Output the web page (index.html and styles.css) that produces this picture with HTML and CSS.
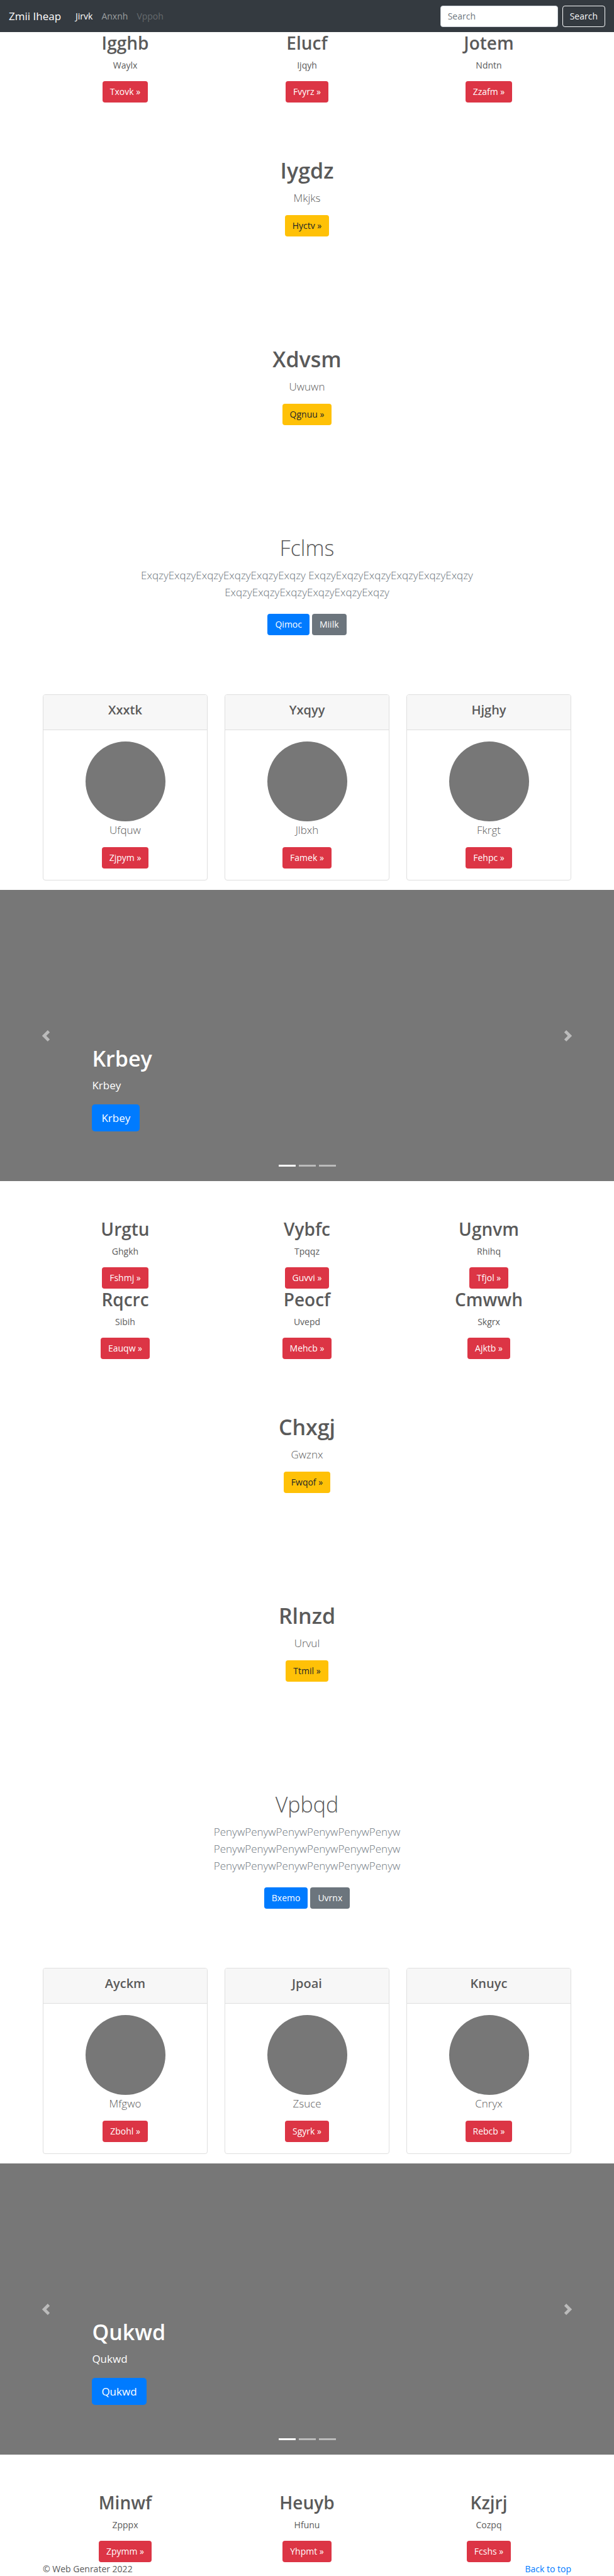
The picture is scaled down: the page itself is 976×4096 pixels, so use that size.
FILE: index.html
```html
<!DOCTYPE html>
<html lang="en">
<head>
<meta charset="utf-8">
<meta name="viewport" content="width=device-width, initial-scale=1">
<title>Zmii Iheap</title>
<link rel="stylesheet" href="styles.css">
</head>
<body id="top">
<header class="navbar">
  <a class="brand" href="#top">Zmii Iheap</a>
  <nav class="nav">
    <a class="nav-link active" href="#">Jirvk</a>
    <a class="nav-link" href="#">Anxnh</a>
    <a class="nav-link disabled" aria-disabled="true">Vppoh</a>
  </nav>
  <form class="search">
    <input class="search-input" type="search" placeholder="Search" aria-label="Search">
    <button class="btn btn-outline" type="submit">Search</button>
  </form>
</header>

<main>
  <section class="container columns">
    <div class="column"><h2>Igghb</h2><p>Waylx</p><a class="btn btn-danger" href="#">Txovk »</a></div>
    <div class="column"><h2>Elucf</h2><p>Ijqyh</p><a class="btn btn-danger" href="#">Fvyrz »</a></div>
    <div class="column"><h2>Jotem</h2><p>Ndntn</p><a class="btn btn-danger" href="#">Zzafm »</a></div>
  </section>

  <section class="hero"><h1>Iygdz</h1><p class="lead">Mkjks</p><a class="btn btn-warning" href="#">Hyctv »</a></section>
  <section class="hero"><h1>Xdvsm</h1><p class="lead">Uwuwn</p><a class="btn btn-warning" href="#">Qgnuu »</a></section>
  <section class="hero">
    <h1 class="light">Fclms</h1>
    <p class="lead muted">ExqzyExqzyExqzyExqzyExqzyExqzy ExqzyExqzyExqzyExqzyExqzyExqzy ExqzyExqzyExqzyExqzyExqzyExqzy</p>
    <div class="actions"><a class="btn btn-primary" href="#">Qimoc</a><a class="btn btn-secondary" href="#">Miilk</a></div>
  </section>

  <section class="container cards">
    <article class="card"><div class="card-header"><h4>Xxxtk</h4></div><div class="card-body"><div class="avatar"></div><p class="lead">Ufquw</p><a class="btn btn-danger" href="#">Zjpym »</a></div></article>
    <article class="card"><div class="card-header"><h4>Yxqyy</h4></div><div class="card-body"><div class="avatar"></div><p class="lead">Jlbxh</p><a class="btn btn-danger" href="#">Famek »</a></div></article>
    <article class="card"><div class="card-header"><h4>Hjghy</h4></div><div class="card-body"><div class="avatar"></div><p class="lead">Fkrgt</p><a class="btn btn-danger" href="#">Fehpc »</a></div></article>
  </section>

  <section class="carousel">
    <button class="control" type="button" aria-label="Previous"><svg viewBox="0 0 8 8"><path d="M5.25 0l-4 4 4 4 1.5-1.5-2.5-2.5 2.5-2.5-1.5-1.5z"/></svg></button>
    <div class="caption"><h1>Krbey</h1><p>Krbey</p><a class="btn btn-primary btn-lg" href="#">Krbey</a></div>
    <button class="control" type="button" aria-label="Next"><svg viewBox="0 0 8 8"><path d="M2.75 0l-1.5 1.5 2.5 2.5-2.5 2.5 1.5 1.5 4-4-4-4z"/></svg></button>
    <div class="indicators"><button class="current" type="button" aria-label="Slide 1"></button><button type="button" aria-label="Slide 2"></button><button type="button" aria-label="Slide 3"></button></div>
  </section>

  <section class="container columns">
    <div class="column"><h2>Urgtu</h2><p>Ghgkh</p><a class="btn btn-danger" href="#">Fshmj »</a></div>
    <div class="column"><h2>Vybfc</h2><p>Tpqqz</p><a class="btn btn-danger" href="#">Guvvi »</a></div>
    <div class="column"><h2>Ugnvm</h2><p>Rhihq</p><a class="btn btn-danger" href="#">Tfjol »</a></div>
    <div class="column"><h2>Rqcrc</h2><p>Sibih</p><a class="btn btn-danger" href="#">Eauqw »</a></div>
    <div class="column"><h2>Peocf</h2><p>Uvepd</p><a class="btn btn-danger" href="#">Mehcb »</a></div>
    <div class="column"><h2>Cmwwh</h2><p>Skgrx</p><a class="btn btn-danger" href="#">Ajktb »</a></div>
  </section>

  <section class="hero"><h1>Chxgj</h1><p class="lead">Gwznx</p><a class="btn btn-warning" href="#">Fwqof »</a></section>
  <section class="hero"><h1>Rlnzd</h1><p class="lead">Urvul</p><a class="btn btn-warning" href="#">Ttmil »</a></section>
  <section class="hero">
    <h1 class="light">Vpbqd</h1>
    <p class="lead muted">PenywPenywPenywPenywPenywPenyw PenywPenywPenywPenywPenywPenyw PenywPenywPenywPenywPenywPenyw</p>
    <div class="actions"><a class="btn btn-primary" href="#">Bxemo</a><a class="btn btn-secondary" href="#">Uvrnx</a></div>
  </section>

  <section class="container cards">
    <article class="card"><div class="card-header"><h4>Ayckm</h4></div><div class="card-body"><div class="avatar"></div><p class="lead">Mfgwo</p><a class="btn btn-danger" href="#">Zbohl »</a></div></article>
    <article class="card"><div class="card-header"><h4>Jpoai</h4></div><div class="card-body"><div class="avatar"></div><p class="lead">Zsuce</p><a class="btn btn-danger" href="#">Sgyrk »</a></div></article>
    <article class="card"><div class="card-header"><h4>Knuyc</h4></div><div class="card-body"><div class="avatar"></div><p class="lead">Cnryx</p><a class="btn btn-danger" href="#">Rebcb »</a></div></article>
  </section>

  <section class="carousel">
    <button class="control" type="button" aria-label="Previous"><svg viewBox="0 0 8 8"><path d="M5.25 0l-4 4 4 4 1.5-1.5-2.5-2.5 2.5-2.5-1.5-1.5z"/></svg></button>
    <div class="caption"><h1>Qukwd</h1><p>Qukwd</p><a class="btn btn-primary btn-lg" href="#">Qukwd</a></div>
    <button class="control" type="button" aria-label="Next"><svg viewBox="0 0 8 8"><path d="M2.75 0l-1.5 1.5 2.5 2.5-2.5 2.5 1.5 1.5 4-4-4-4z"/></svg></button>
    <div class="indicators"><button class="current" type="button" aria-label="Slide 1"></button><button type="button" aria-label="Slide 2"></button><button type="button" aria-label="Slide 3"></button></div>
  </section>

  <section class="container columns">
    <div class="column"><h2>Minwf</h2><p>Zpppx</p><a class="btn btn-danger" href="#">Zpymm »</a></div>
    <div class="column"><h2>Heuyb</h2><p>Hfunu</p><a class="btn btn-danger" href="#">Yhpmt »</a></div>
    <div class="column"><h2>Kzjrj</h2><p>Cozpq</p><a class="btn btn-danger" href="#">Fcshs »</a></div>
  </section>
</main>

<footer class="container footer">
  <span>© Web Genrater 2022</span>
  <a href="#top">Back to top</a>
</footer>
</body>
</html>
```
FILE: styles.css
```css
* { box-sizing: border-box; }

body {
  margin: 0;
  background: #fff;
  color: #5a5a5a;
  font-family: "Open Sans", "Noto Sans", sans-serif;
  font-size: 14px;
  line-height: 22px;
}

h1, h2, h4, p { margin: 0; }

h1 { font-size: 34px; font-weight: 600; line-height: 43px; margin-bottom: 8px; }
h2 { font-size: 28px; font-weight: 600; line-height: 35px; margin-bottom: 7px; }
h4 { font-size: 20px; font-weight: 600; line-height: 26px; margin-bottom: 7px; }
p { margin-bottom: 14px; }

.light { font-weight: 300; }
.lead { font-size: 17px; font-weight: 300; line-height: 27px; }
.muted { color: #6c757d; }

.container {
  width: 100%;
  max-width: 868px;
  margin: 0 auto;
  padding: 0 14px;
}

/* Buttons */
.btn {
  display: inline-block;
  border: 1px solid transparent;
  border-radius: 4px;
  padding: 5px 11px;
  font: inherit;
  line-height: 22px;
  color: #fff;
  text-decoration: none;
}
.btn-danger { background: #dc3545; }
.btn-warning { background: #ffc107; color: #212529; }
.btn-primary { background: #007bff; }
.btn-secondary { background: #6c757d; }
.btn-outline { background: transparent; border-color: #f8f9fa; color: #f8f9fa; }
.btn-lg { padding: 7px 14px; font-size: 17px; line-height: 27px; border-radius: 5px; }

/* Navigation bar */
.navbar {
  display: flex;
  align-items: center;
  min-height: 51px;
  padding: 0 14px;
  background: #343a40;
}
.brand { margin-right: 16px; color: #fff; font-size: 17px; text-decoration: none; }
.nav { display: flex; flex: 1; }
.nav-link { padding: 0 7px; color: rgba(255, 255, 255, .5); text-decoration: none; }
.nav-link.active { color: #fff; }
.nav-link.disabled { color: rgba(255, 255, 255, .25); }
.search { display: flex; gap: 7px; }
.search-input {
  width: 187px;
  height: 34px;
  padding: 5px 11px;
  border: 1px solid #ced4da;
  border-radius: 4px;
  background: #fff;
  color: #495057;
  font: inherit;
}
.search-input::placeholder { color: #6c757d; opacity: 1; }

/* Three text columns */
.columns { display: grid; grid-template-columns: repeat(3, 1fr); column-gap: 27px; }
.column { display: flex; flex-direction: column; align-items: center; }

/* Centred blocks */
.hero {
  display: flex;
  flex-direction: column;
  align-items: center;
  padding: 87px 14px;
  text-align: center;
}
.hero .lead { max-width: 556px; }
.actions { display: flex; gap: 4px; padding: 7px 0; }

/* Cards */
.cards { display: grid; grid-template-columns: repeat(3, 1fr); gap: 27px; margin-bottom: 15px; }
.card {
  border: 1px solid #dfdfdf;
  border-radius: 4px;
  overflow: hidden;
  text-align: center;
}
.card-header { padding: 11px 18px; background: #f7f7f7; border-bottom: 1px solid #dfdfdf; }
.card-body { display: flex; flex-direction: column; align-items: center; padding: 18px; }
.avatar { width: 127px; height: 127px; border-radius: 50%; background: #777; }

/* Carousel */
.carousel {
  position: relative;
  display: grid;
  grid-template-columns: 15% 1fr 15%;
  height: 463px;
  margin-bottom: 59px;
  background: #777;
  color: #fff;
}
.control {
  display: flex;
  align-items: center;
  justify-content: center;
  border: 0;
  padding: 0;
  background: none;
  opacity: .5;
}
.control svg { width: 18px; height: 18px; fill: #fff; }
.caption { align-self: end; padding-bottom: 79px; }
.caption p { font-size: 17px; line-height: 25px; margin-bottom: 18px; }
.caption .btn { display: block; width: fit-content; }
.indicators {
  position: absolute;
  right: 0;
  bottom: 23px;
  left: 0;
  display: flex;
  justify-content: center;
  gap: 5px;
}
.indicators button { width: 27px; height: 3px; border: 0; padding: 0; background: #fff; opacity: .5; }
.indicators .current { opacity: 1; }

/* Footer */
.footer { display: flex; justify-content: space-between; }
.footer a { color: #007bff; text-decoration: none; }
```
